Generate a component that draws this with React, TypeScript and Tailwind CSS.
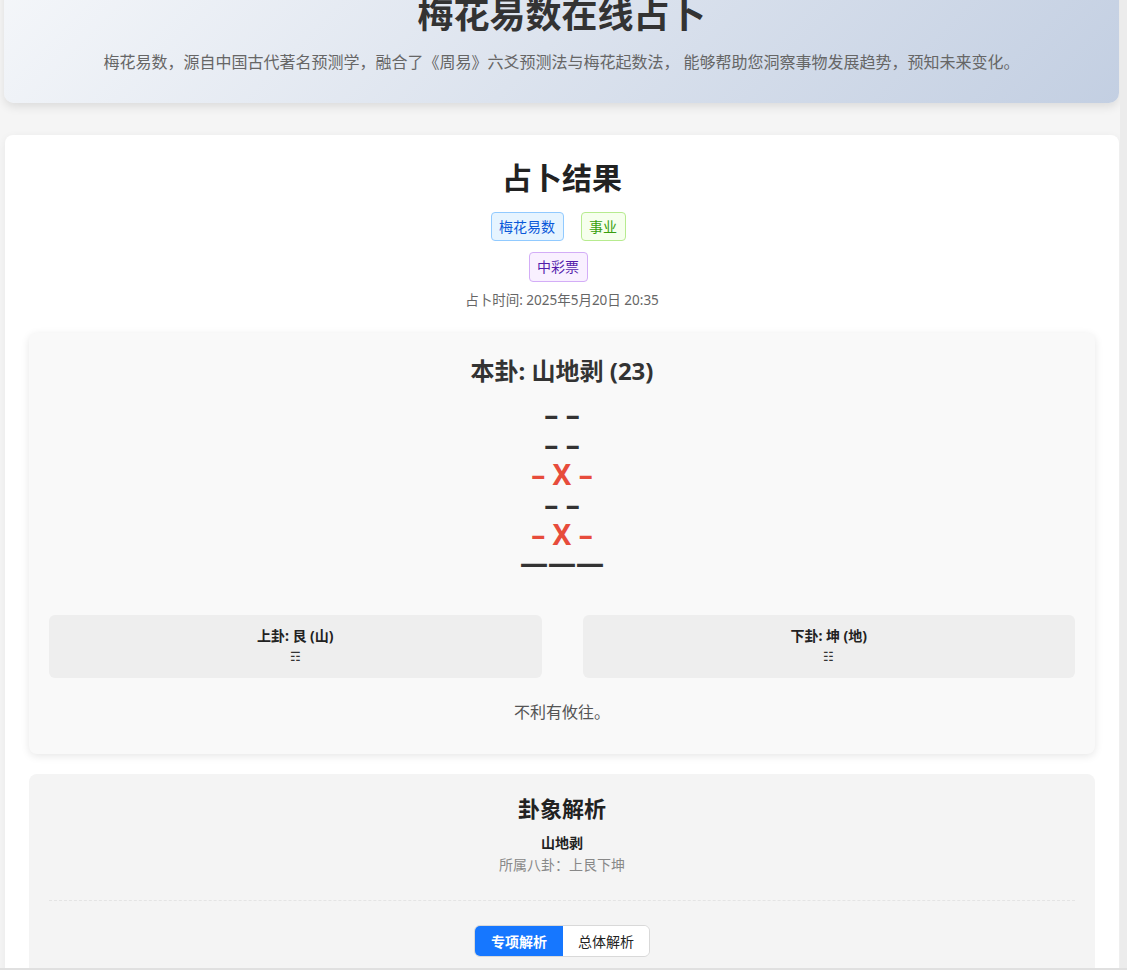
const font = { fontFamily: '"Noto Sans", "Noto Sans CJK SC", sans-serif' }

const lines = [
  { kind: 'yin' },
  { kind: 'yin' },
  { kind: 'moving' },
  { kind: 'yin' },
  { kind: 'moving' },
  { kind: 'yang' },
]

const Line = ({ kind }: { kind: string }) => {
  if (kind === 'moving') return <div className="h-[30px] leading-[30px] text-[#e74c3c]">– X –</div>
  if (kind === 'yang') return <div className="h-[30px] leading-[26px] text-[#333]">———</div>
  return <div className="h-[30px] leading-[30px] text-[#333]">– –</div>
}

const tagBase = 'mr-[8px] rounded-[4px] border px-[7.5px] text-[14px]'

const App = () => {
  return (
    <div style={font} className="flex h-[970px] overflow-hidden border-b-2 border-[#e0e0e0] bg-[#f5f5f5]">
      <div className="flex-1 pl-[4px] pr-[1px]">
        <header className="-mt-[40px] rounded-[10px] bg-[linear-gradient(135deg,#f5f7fa_0%,#c3cfe2_100%)] px-6 pt-[33px] pb-[29px] text-center shadow-[0_4px_10px_rgba(0,0,0,0.1)]">
          <h1 className="text-[36px] leading-[43px] font-bold text-[#333]">梅花易数在线占卜</h1>
          <p className="mt-[14px] text-[16px] leading-[24px] text-[#666]">
            梅花易数，源自中国古代著名预测学，融合了《周易》六爻预测法与梅花起数法， 能够帮助您洞察事物发展趋势，预知未来变化。
          </p>
        </header>

        <main className="mt-[32px] ml-[1px] rounded-[8px] bg-white p-6 shadow-[0_2px_8px_rgba(0,0,0,0.06)]">
          <div className="text-center">
            <h2 className="text-[30px] leading-[38px] font-bold text-[#222]">占卜结果</h2>
            <div className="mt-[15px] flex justify-center gap-[9px]">
              <span className={`${tagBase} border-[#91caff] bg-[#e6f4ff] leading-[27px] text-[#0958d9]`}>梅花易数</span>
              <span className={`${tagBase} border-[#b7eb8f] bg-[#f6ffed] leading-[27px] text-[#389e0d]`}>事业</span>
            </div>
            <div className="mt-[11px] flex justify-center">
              <span className={`${tagBase} border-[#d3adf7] bg-[#f9f0ff] leading-[28px] text-[#531dab]`}>中彩票</span>
            </div>
            <p className="mt-[8px] text-[13.5px] leading-[21px] text-[#666]">占卜时间: 2025年5月20日 20:35</p>
          </div>

          <section className="mt-[22px] rounded-[8px] bg-[#f9f9f9] px-5 pt-5 pb-[30px] text-center shadow-[0_2px_8px_rgba(0,0,0,0.1)]">
            <h3 className="text-[24px] leading-[36px] font-bold text-[#333]">本卦: 山地剥 (23)</h3>
            <div className="mt-[10px] text-[28px] font-bold">
              {lines.map((l, i) => <Line key={i} kind={l.kind} />)}
            </div>
            <div className="mt-[36px] grid grid-cols-2 gap-[41px]">
              <div className="rounded-[6px] bg-[#eeeeee] pt-[10px] pb-[11px]">
                <div className="text-[14px] leading-[21px] font-bold text-[#222]">上卦: 艮 (山)</div>
                <div className="text-[12px] leading-[21px] text-[#333]">☶</div>
              </div>
              <div className="rounded-[6px] bg-[#eeeeee] pt-[10px] pb-[11px]">
                <div className="text-[14px] leading-[21px] font-bold text-[#222]">下卦: 坤 (地)</div>
                <div className="text-[12px] leading-[21px] text-[#333]">☷</div>
              </div>
            </div>
            <p className="mt-[22px] text-[16px] leading-[24px] text-[#555]">不利有攸往。</p>
          </section>

          <section className="mt-[20px] rounded-[8px] bg-[#f4f4f4] px-5 pt-5 pb-6 text-center">
            <h3 className="text-[22px] leading-[28px] font-bold text-[#222]">卦象解析</h3>
            <div className="mt-[10px] text-[14px] leading-[22px] font-bold text-[#222]">山地剥</div>
            <div className="text-[14px] leading-[22px] text-[#888]">所属八卦：上艮下坤</div>
            <div className="mt-[24px] border-t border-dashed border-[#e4e4e4]" />
            <div className="mt-[24px] inline-flex overflow-hidden rounded-[6px] border border-[#d9d9d9] text-[14px]">
              <button className="h-[30px] bg-[#1677ff] px-[16px] font-bold text-white">专项解析</button>
              <button className="h-[30px] bg-white px-[15px] text-[#222]">总体解析</button>
            </div>
          </section>
        </main>
      </div>
      <div className="w-[7px] bg-[#ececec]" />
    </div>
  )
}

export default App
